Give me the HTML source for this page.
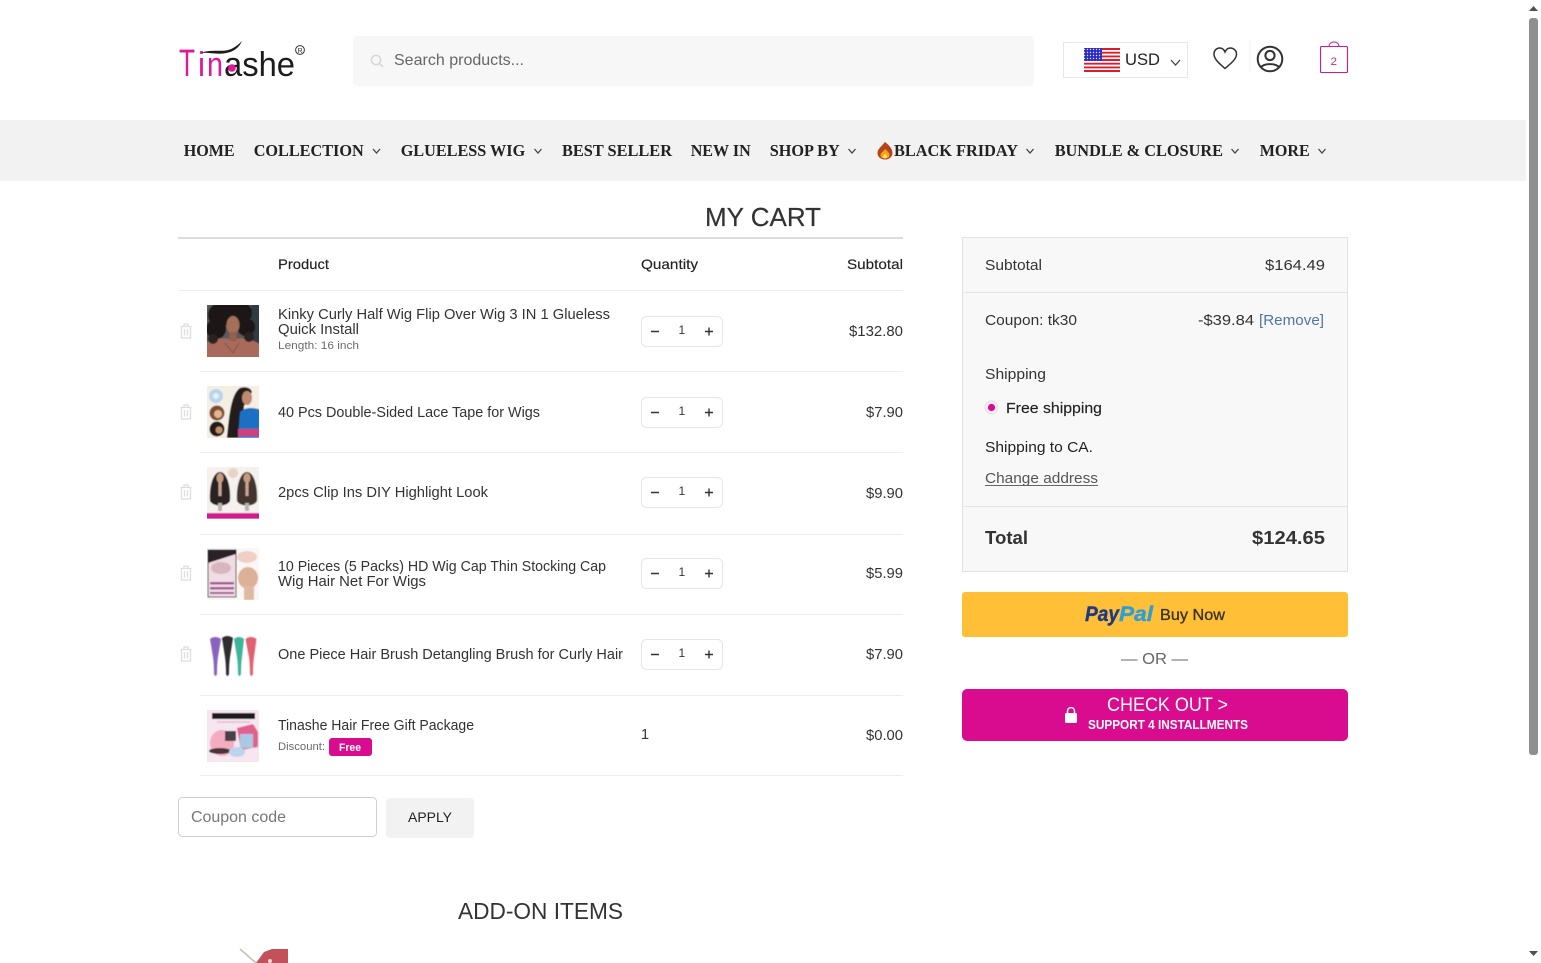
<!DOCTYPE html>
<html lang="en">
<head>
<meta charset="utf-8">
<title>My Cart - Tinashe</title>
<style>
html,body{margin:0;padding:0;width:1541px;height:963px;overflow:hidden;background:#fff}
svg{display:block}
text{font-family:"Liberation Sans",sans-serif;fill:#333}
.nav text{font-family:"Liberation Serif",serif;font-weight:700;font-size:17px;fill:#222}
.chev{fill:none;stroke:#444;stroke-width:1.3}
.row{font-size:14.5px}
.small{font-size:11px;fill:#6a6a6a}
.qty{fill:#fff;stroke:#e6e6e6;stroke-width:1}
.qn{font-size:12px;fill:#333}
.sym{stroke:#333;stroke-width:1.4;fill:none}
.trash{fill:none;stroke:#dedede;stroke-width:1.3}
.line{stroke:#eee;stroke-width:1}
</style>
</head>
<body>
<svg width="1541" height="963" viewBox="0 0 1541 963" xmlns="http://www.w3.org/2000/svg">
<defs>
<pattern id="stars" width="3" height="3" patternUnits="userSpaceOnUse"><rect width="3" height="3" fill="#2a2ac0"/><circle cx="1.5" cy="1.5" r=".7" fill="#dfe3ff"/></pattern>
<filter id="soft" x="-5%" y="-5%" width="110%" height="110%"><feGaussianBlur stdDeviation=".45"/></filter>
<g id="tr"><path class="trash" d="M-5.5-4.500H5.500M-2-4.500V-7H2V-4.500M-4.500-4.500V7H4.500V-4.500M-1.500-2V4.500M1.500-2V4.500"/></g>
<g id="qtyb"><rect class="qty" x="641.5" y=".5" width="81" height="30" rx="5"/><path class="sym" d="M651 15.500H659M705 15.500H713M709 11.500V19.500"/><text class="qn" x="678.500" y="18">1</text></g>
</defs>

<!-- header -->
<g>
<text x="179" y="76" font-size="38" style="fill:#e0179a" textLength="16" lengthAdjust="spacingAndGlyphs">T</text>
<text x="198" y="76" font-size="34" style="fill:#e0179a" textLength="7" lengthAdjust="spacingAndGlyphs">i</text>
<text x="207" y="76" font-size="34" style="fill:#e0179a" textLength="16" lengthAdjust="spacingAndGlyphs">n</text>
<text x="224" y="76" font-size="34" style="fill:#1c1c1c" textLength="71" lengthAdjust="spacingAndGlyphs">ashe</text>
<circle cx="232" cy="68" r="3.800" fill="#e0179a"/>
<path d="M200 53C212 49 222 52 228 50C233 49 238 45 242 41C239 48 233 52 226 53C218 55 208 52 200 53Z" fill="#1c1c1c"/>
<circle cx="300" cy="50" r="4.400" fill="none" stroke="#333" stroke-width="1"/>
<text x="297.600" y="53" font-size="7" textLength="5" lengthAdjust="spacingAndGlyphs">R</text>

<rect x="353" y="36" width="681" height="50" rx="4" fill="#f7f7f7"/>
<circle cx="376" cy="60" r="4.600" fill="none" stroke="#d6d6d6" stroke-width="1.500"/>
<path d="M379.500 63.500L383 67" stroke="#d6d6d6" stroke-width="1.500"/>
<text x="394" y="65" font-size="16" style="fill:#666" textLength="130" lengthAdjust="spacingAndGlyphs">Search products...</text>

<rect x="1063.500" y="42.500" width="124" height="35" fill="#fff" stroke="#e8e8e8"/>
<rect x="1084" y="48" width="36" height="24" fill="#fff"/>
<path d="M1084 49H1120M1084 52.700H1120M1084 56.400H1120M1084 60H1120M1084 63.700H1120M1084 67.400H1120M1084 71H1120" stroke="#dc1c2e" stroke-width="1.900"/>
<rect x="1084" y="48" width="18" height="13" fill="url(#stars)"/>
<text x="1125" y="65" font-size="17" style="fill:#222" textLength="35" lengthAdjust="spacingAndGlyphs">USD</text>
<path class="chev" d="M1171 60L1175.500 65L1180 60"/>

<path d="M1225 68.500C1220 64 1214 59.500 1214 54C1214 50.500 1216.500 48 1219.500 48C1222 48 1224 49.500 1225 52C1226 49.500 1228 48 1230.500 48C1233.500 48 1236.500 50.500 1236.500 54C1236.500 59.500 1230 64 1225 68.500Z" fill="none" stroke="#333" stroke-width="1.500"/>
<path d="M1250 40V72" stroke="#f0f0f0"/>
<circle cx="1270" cy="59" r="12.300" fill="none" stroke="#333" stroke-width="2"/>
<circle cx="1270" cy="55.500" r="4.600" fill="none" stroke="#333" stroke-width="2"/>
<path d="M1261 67.500C1263.500 63 1276.500 63 1279 67.500" fill="none" stroke="#333" stroke-width="2"/>
<rect x="1320.500" y="46.500" width="27" height="26" rx="1" fill="#fff" stroke="#d6188f" stroke-width="1.100"/>
<path d="M1329 46.500C1329 40.500 1339 40.500 1339 46.500" fill="none" stroke="#d6188f" stroke-width="1"/>
<text x="1330.500" y="65" font-size="11" style="fill:#c9288f" textLength="6.500" lengthAdjust="spacingAndGlyphs">2</text>
</g>

<!-- nav -->
<rect x="0" y="120" width="1526" height="61" fill="#f2f2f2"/>
<g class="nav">
<text x="183.700" y="156" textLength="51" lengthAdjust="spacingAndGlyphs">HOME</text>
<text x="253.700" y="156" textLength="110" lengthAdjust="spacingAndGlyphs">COLLECTION</text>
<path class="chev" d="M373 149L376.500 153L380 149"/>
<text x="400.700" y="156" textLength="124.500" lengthAdjust="spacingAndGlyphs">GLUELESS WIG</text>
<path class="chev" d="M534.500 149L538 153L541.500 149"/>
<text x="562" y="156" textLength="110" lengthAdjust="spacingAndGlyphs">BEST SELLER</text>
<text x="690.700" y="156" textLength="60" lengthAdjust="spacingAndGlyphs">NEW IN</text>
<text x="769.700" y="156" textLength="70" lengthAdjust="spacingAndGlyphs">SHOP BY</text>
<path class="chev" d="M848.500 149L852 153L855.500 149"/>
<path d="M885 142C889 145 892.500 149 892.500 153C892.500 157 889 159.500 885 159.500C881 159.500 877.500 157 877.500 153C877.500 149 881 147 885 142Z" fill="#b4441c"/>
<path d="M885 149C887.500 151 889.500 153 889.500 155C889.500 157.500 887.500 158.500 885 158.500C882.500 158.500 880.500 157.500 880.500 155C880.500 153 883 152 885 149Z" fill="#f7a21b"/>
<path d="M885 153.500C886.500 155 887 156 887 156.500C887 157.800 886 158.300 885 158.300C884 158.300 883 157.800 883 156.500C883 155.500 884.500 155 885 153.500Z" fill="#ffe46a"/>
<text x="894" y="156" textLength="124" lengthAdjust="spacingAndGlyphs">BLACK FRIDAY</text>
<path class="chev" d="M1026.500 149L1030 153L1033.500 149"/>
<text x="1054.700" y="156" textLength="168.300" lengthAdjust="spacingAndGlyphs">BUNDLE &amp; CLOSURE</text>
<path class="chev" d="M1231.500 149L1235 153L1238.500 149"/>
<text x="1259.700" y="156" textLength="50" lengthAdjust="spacingAndGlyphs">MORE</text>
<path class="chev" d="M1318.500 149L1322 153L1325.500 149"/>
</g>

<!-- scrollbar -->
<rect x="1529" y="18" width="9" height="737" rx="3" fill="#8f8f8f"/>
<path d="M1529 11L1533.500 6L1538 11Z" fill="#505050"/>
<path d="M1529 951L1533.500 956L1538 951Z" fill="#505050"/>

<!-- cart table -->
<text x="705" y="226" font-size="26" style="fill:#333;stroke:#333;stroke-width:.2" textLength="116" lengthAdjust="spacingAndGlyphs">MY CART</text>
<rect x="178" y="237" width="725" height="2" fill="#dcdcdc"/>
<text x="278" y="269" font-size="14" style="fill:#222;stroke:#222;stroke-width:.15" textLength="51" lengthAdjust="spacingAndGlyphs">Product</text>
<text x="641" y="269" font-size="14" style="fill:#222;stroke:#222;stroke-width:.15" textLength="57" lengthAdjust="spacingAndGlyphs">Quantity</text>
<text x="847" y="269" font-size="14" style="fill:#222;stroke:#222;stroke-width:.15" textLength="56" lengthAdjust="spacingAndGlyphs">Subtotal</text>
<path class="line" d="M178 290.500H903M200 371.500H903M200 452.500H903M200 534.500H903M200 614.500H903M200 695.500H903M200 775.500H903"/>

<use href="#tr" x="186" y="331"/>
<use href="#tr" x="186" y="412"/>
<use href="#tr" x="186" y="492"/>
<use href="#tr" x="186" y="573"/>
<use href="#tr" x="186" y="654"/>

<!-- image 1 -->
<svg x="207" y="305" width="52" height="52" viewBox="0 0 52 52">
<g filter="url(#soft)">
<rect x="-2" y="-2" width="56" height="56" fill="#5a5a5c"/>
<rect x="44" y="-2" width="10" height="40" fill="#2f3a40"/>
<path d="M-2 54V38C8 33 18 32 25 35C33 32 44 33 54 40V54Z" fill="#a96b5c"/>
<circle cx="13" cy="10" r="12" fill="#1b1716"/><circle cx="33" cy="8" r="12" fill="#1b1716"/>
<circle cx="9" cy="24" r="10" fill="#1b1716"/><circle cx="39" cy="22" r="9" fill="#1b1716"/>
<circle cx="25" cy="6" r="9" fill="#1b1716"/><circle cx="6" cy="34" r="5" fill="#2a2220"/><circle cx="42" cy="32" r="5" fill="#2a2220"/>
<ellipse cx="26" cy="20" rx="6.500" ry="9" fill="#a4705a"/>
<rect x="22.500" y="27" width="7" height="9" fill="#94604c"/>
<path d="M18 38L26 48L32 38" fill="none" stroke="#7e4f40" stroke-width="1"/>
</g>
</svg>
<!-- image 2 -->
<svg x="207" y="386" width="52" height="52" viewBox="0 0 52 52">
<g filter="url(#soft)">
<rect x="-2" y="-2" width="56" height="56" fill="#f5eee5"/>
<circle cx="9" cy="10" r="7" fill="#b9d5ea"/><circle cx="9" cy="10" r="3" fill="#e7eff5"/>
<circle cx="10" cy="27" r="7.500" fill="#7c4d32"/><circle cx="11" cy="28" r="4" fill="#e4b48f"/>
<circle cx="10" cy="43" r="7.500" fill="#241a18"/><circle cx="12" cy="44" r="3.500" fill="#c99070"/>
<path d="M20 52C22 30 24 8 33 2C39 0 44 2 45 6L37 20L34 52Z" fill="#241d1c"/>
<ellipse cx="40" cy="12" rx="5" ry="7" fill="#c08a6e"/>
<path d="M31 52L33 26C38 21 46 21 54 24V52Z" fill="#1c70c4"/>
<rect x="31" y="43" width="23" height="7" fill="#cf3f7c"/>
</g>
</svg>
<!-- image 3 -->
<svg x="207" y="467" width="52" height="52" viewBox="0 0 52 52">
<g filter="url(#soft)">
<rect x="-2" y="-2" width="56" height="56" fill="#f4f1ef"/>
<path d="M3 34C2 20 6 5 13 5C20 5 24 20 23 34C20 40 6 40 3 34Z" fill="#2a2120"/>
<ellipse cx="13" cy="11" rx="3.500" ry="5" fill="#c79b82"/>
<rect x="11.500" y="15" width="3" height="14" fill="#c7a594"/>
<rect x="11" y="36" width="4" height="8" fill="#b9b3b0"/>
<path d="M30 34C29 20 33 5 40 5C47 5 51 20 50 34C47 40 33 40 30 34Z" fill="#43342d"/>
<ellipse cx="40" cy="11" rx="3.500" ry="5" fill="#c79b82"/>
<rect x="38.500" y="15" width="3" height="14" fill="#c7a594"/>
<rect x="38" y="36" width="4" height="8" fill="#b9b3b0"/>
<circle cx="26" cy="6" r="5" fill="#ecd2c2"/>
<rect x="-2" y="46" width="56" height="6" fill="#d31a8e"/>
</g>
</svg>
<!-- image 4 -->
<svg x="207" y="548" width="52" height="52" viewBox="0 0 52 52">
<g filter="url(#soft)">
<rect x="-2" y="-2" width="56" height="56" fill="#fbf7f6"/>
<rect x="1" y="2" width="28" height="47" fill="#efdde3" stroke="#3a3033" stroke-width="1"/>
<path d="M1 2H29V6L1 15Z" fill="#2a2426"/>
<ellipse cx="14" cy="20" rx="10" ry="6" fill="#d8b6bd"/>
<rect x="3" y="34" width="24" height="2.500" fill="#a35a96"/>
<rect x="3" y="39" width="24" height="2.500" fill="#a35a96"/>
<rect x="3" y="44" width="24" height="2" fill="#a35a96"/>
<ellipse cx="40" cy="9" rx="10" ry="6" fill="#f1cfc6"/>
<ellipse cx="41" cy="30" rx="10" ry="11" fill="#dcb198"/>
<rect x="37" y="38" width="10" height="14" fill="#e0b9a2"/>
</g>
</svg>
<!-- image 5 -->
<svg x="207" y="629" width="52" height="52" viewBox="0 0 52 52">
<rect width="52" height="52" fill="#fff"/>
<g filter="url(#soft)">
<path d="M3 10Q8 6 14 10L11 28Q10 35 10 45Q8.500 49 7 45Q7 35 6 28Z" fill="#8a63bf"/>
<path d="M15 9Q20 5 26 9L23 28Q22 35 22 45Q20.500 49 19 45Q19 35 18 28Z" fill="#2d2d30"/>
<path d="M27 10Q32 6 37 10L35 28Q34 35 34 45Q32.500 49 31 45Q31 35 30 28Z" fill="#3db59b"/>
<path d="M38.500 10Q44 6 49.500 10L47 28Q46 35 46 45Q44.500 49 43 45Q43 35 42 28Z" fill="#e3606f"/>
</g>
</svg>
<!-- image 6 -->
<svg x="207" y="710" width="52" height="52" viewBox="0 0 52 52">
<g filter="url(#soft)">
<rect x="-2" y="-2" width="56" height="56" fill="#f7e5ef"/>
<rect x="5" y="3" width="43" height="6" fill="#1e1a1e"/>
<rect x="10" y="11" width="33" height="2" fill="#e4c6d4"/>
<ellipse cx="15" cy="33" rx="12" ry="13" fill="#f2adc1"/>
<ellipse cx="13" cy="41" rx="11" ry="3" fill="#4a3236"/>
<rect x="18" y="21" width="11" height="10" fill="#4c4044"/>
<path d="M30 18L46 14L51 22V37L34 40Z" fill="#e2608e"/>
<rect x="33" y="24" width="13" height="14" fill="#a9c9e4"/>
<ellipse cx="30" cy="42" rx="8" ry="5" fill="#bcd5ec"/>
</g>
</svg>

<g class="row">
<text x="278" y="319" textLength="332" lengthAdjust="spacingAndGlyphs">Kinky Curly Half Wig Flip Over Wig 3 IN 1 Glueless</text>
<text x="278" y="334" textLength="81" lengthAdjust="spacingAndGlyphs">Quick Install</text>
<text x="278" y="417" textLength="262" lengthAdjust="spacingAndGlyphs">40 Pcs Double-Sided Lace Tape for Wigs</text>
<text x="278" y="497" textLength="210" lengthAdjust="spacingAndGlyphs">2pcs Clip Ins DIY Highlight Look</text>
<text x="278" y="571" textLength="328" lengthAdjust="spacingAndGlyphs">10 Pieces (5 Packs) HD Wig Cap Thin Stocking Cap</text>
<text x="278" y="586" textLength="148" lengthAdjust="spacingAndGlyphs">Wig Hair Net For Wigs</text>
<text x="278" y="659" textLength="345" lengthAdjust="spacingAndGlyphs">One Piece Hair Brush Detangling Brush for Curly Hair</text>
<text x="278" y="730" textLength="196" lengthAdjust="spacingAndGlyphs">Tinashe Hair Free Gift Package</text>
<text x="641" y="739">1</text>
<text x="849" y="336" textLength="54" lengthAdjust="spacingAndGlyphs">$132.80</text>
<text x="866" y="417" textLength="37" lengthAdjust="spacingAndGlyphs">$7.90</text>
<text x="866" y="498" textLength="37" lengthAdjust="spacingAndGlyphs">$9.90</text>
<text x="866" y="578" textLength="37" lengthAdjust="spacingAndGlyphs">$5.99</text>
<text x="866" y="659" textLength="37" lengthAdjust="spacingAndGlyphs">$7.90</text>
<text x="866" y="740" textLength="37" lengthAdjust="spacingAndGlyphs">$0.00</text>
</g>
<text class="small" x="278" y="349" textLength="81" lengthAdjust="spacingAndGlyphs">Length: 16 inch</text>
<text class="small" x="278" y="750" textLength="47" lengthAdjust="spacingAndGlyphs">Discount:</text>
<rect x="329" y="738" width="43" height="18" rx="3" fill="#d90b8f"/>
<text x="339" y="751" font-size="11" font-weight="700" style="fill:#fff" textLength="22" lengthAdjust="spacingAndGlyphs">Free</text>

<use href="#qtyb" y="316"/>
<use href="#qtyb" y="397"/>
<use href="#qtyb" y="477"/>
<use href="#qtyb" y="558"/>
<use href="#qtyb" y="639"/>

<!-- coupon -->
<rect x="178.500" y="797.500" width="198" height="39" rx="4" fill="#fff" stroke="#cfcfcf"/>
<text x="191" y="822" font-size="16" style="fill:#777" textLength="95" lengthAdjust="spacingAndGlyphs">Coupon code</text>
<rect x="386" y="798" width="88" height="40" rx="4" fill="#f2f2f2"/>
<text x="408" y="822" font-size="14" style="fill:#222" textLength="44" lengthAdjust="spacingAndGlyphs">APPLY</text>

<text x="458" y="919" font-size="23" style="fill:#333" textLength="165" lengthAdjust="spacingAndGlyphs">ADD-ON ITEMS</text>
<path d="M240 949L256 963" stroke="#c9bfae" stroke-width="1.500"/>
<path d="M256 963L264 952L272 949H288V963Z" fill="#c4505a"/>
<circle cx="270" cy="961" r="2" fill="#f2d6d6"/>

<!-- summary -->
<rect x="962.500" y="237.500" width="385" height="334" fill="#f8f8f8" stroke="#e2e2e2"/>
<path d="M963 292.500H1347M963 506.500H1347" stroke="#e4e4e4"/>
<g font-size="15">
<text x="985" y="270" textLength="57" lengthAdjust="spacingAndGlyphs">Subtotal</text>
<text x="1265" y="270" textLength="60" lengthAdjust="spacingAndGlyphs">$164.49</text>
<text x="985" y="325" textLength="92" lengthAdjust="spacingAndGlyphs">Coupon: tk30</text>
<text x="1198" y="325" textLength="56" lengthAdjust="spacingAndGlyphs">-$39.84</text>
<text x="1259" y="325" style="fill:#4f74a8" textLength="65" lengthAdjust="spacingAndGlyphs">[Remove]</text>
<text x="985" y="379" textLength="61" lengthAdjust="spacingAndGlyphs">Shipping</text>
<text x="1006" y="413" style="fill:#222;stroke:#222;stroke-width:.15" textLength="96" lengthAdjust="spacingAndGlyphs">Free shipping</text>
<text x="985" y="452" style="fill:#222" textLength="108" lengthAdjust="spacingAndGlyphs">Shipping to CA.</text>
<text x="985" y="483" style="fill:#555" textLength="113" lengthAdjust="spacingAndGlyphs">Change address</text>
</g>
<path d="M985 485.500H1098" stroke="#666"/>
<circle cx="991.500" cy="407.500" r="6.500" fill="#fbeef6" stroke="#eadfe6"/>
<circle cx="991.500" cy="407.500" r="3.600" fill="#d90b8f"/>
<text x="985" y="544" font-size="18" font-weight="700" style="fill:#333" textLength="43" lengthAdjust="spacingAndGlyphs">Total</text>
<text x="1252" y="544" font-size="18" font-weight="700" style="fill:#333" textLength="73" lengthAdjust="spacingAndGlyphs">$124.65</text>

<!-- paypal -->
<rect x="962" y="592" width="386" height="45" rx="3" fill="#ffc038"/>
<text x="1085" y="621" font-size="21" font-weight="700" font-style="italic" style="fill:#1c3a86;stroke:#1c3a86;stroke-width:.4" textLength="34" lengthAdjust="spacingAndGlyphs">Pay</text>
<text x="1119" y="621" font-size="21" font-weight="700" font-style="italic" style="fill:#2a9fd8;stroke:#2a9fd8;stroke-width:.4" textLength="34" lengthAdjust="spacingAndGlyphs">Pal</text>
<text x="1160" y="620" font-size="15.500" style="fill:#3a3222;stroke:#3a3222;stroke-width:.3" textLength="65" lengthAdjust="spacingAndGlyphs">Buy Now</text>
<text x="1121" y="664" font-size="16" style="fill:#666" textLength="67" lengthAdjust="spacingAndGlyphs">— OR —</text>

<!-- checkout -->
<rect x="962" y="689" width="386" height="52" rx="5" fill="#d90b8f"/>
<rect x="1065" y="713" width="12" height="10" rx="1.500" fill="#fff"/>
<path d="M1067.500 713.500V711C1067.500 706.500 1074.500 706.500 1074.500 711V713.500" fill="none" stroke="#fff" stroke-width="1.500"/>
<text x="1107" y="711" font-size="19" style="fill:#fff" textLength="121" lengthAdjust="spacingAndGlyphs">CHECK OUT &gt;</text>
<text x="1088" y="729" font-size="13" font-weight="700" style="fill:#fff" textLength="160" lengthAdjust="spacingAndGlyphs">SUPPORT 4 INSTALLMENTS</text>
</svg>
</body>
</html>
